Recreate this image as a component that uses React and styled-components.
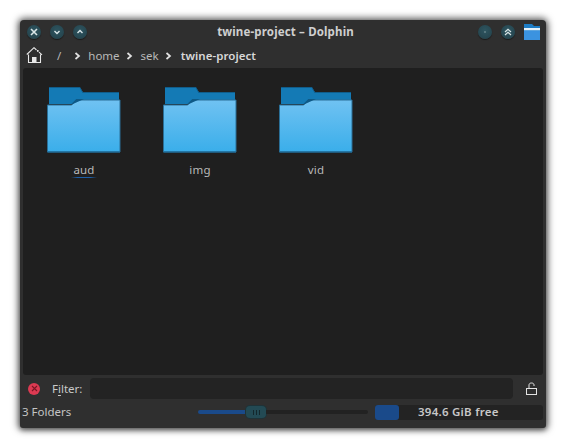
import React from "react";
import styled, { createGlobalStyle } from "styled-components";

const Global = createGlobalStyle`
  html, body { margin: 0; padding: 0; background: #fff; width: 566px; height: 448px; overflow: hidden; }
  * { box-sizing: border-box; }
`;
const Page = styled.div`
  width: 566px; height: 448px; padding: 20px; background: #fff;
  font-family: "Noto Sans", "Open Sans", sans-serif; font-size: 12px; color: #d6d6d6;
`;
const Win = styled.div`
  width: 526px; height: 408px; background: #2f2f2f; border-radius: 4px 4px 3px 3px;
  box-shadow: 0 0 7px 2px rgba(0,0,0,.62), 0 2px 4px rgba(0,0,0,.3);
  display: flex; flex-direction: column; overflow: hidden;
`;
const TitleBar = styled.div`
  height: 23px; flex: none; display: flex; align-items: center; padding: 0 6px 0 7px; position: relative;
`;
const Round = styled.span`
  width: 14px; height: 14px; border-radius: 50%; flex: none; margin-right: ${p => p.$gap ?? 9}px;
  background: radial-gradient(circle at 50% 40%, #2e5560, #223f48); box-shadow: 0 1px 1px rgba(0,0,0,.45);
  display: flex; align-items: center; justify-content: center;
`;
const Title = styled.div`
  flex: 1; text-align: center; font-weight: 700; font-size: 11.5px; color: #cfcfcf; padding-left: 6px; letter-spacing: .15px;
`;
const Crumbs = styled.div`
  height: 25px; flex: none; display: flex; align-items: center; padding: 0 0 0 6px;
`;
const CrumbText = styled.span`
  font-size: 11.5px; color: ${p => p.$active ? "#d8d8d8" : "#b9b9b9"}; font-weight: ${p => p.$active ? 600 : 400};
  letter-spacing: ${p => p.$active ? ".05px" : "0"};
  margin-left: ${p => p.$ml ?? 0}px; margin-right: ${p => p.$mr ?? 0}px;
`;
const ChevIcon = styled.svg`
  width: 7px; height: 8px; flex: none; margin: 1px ${p => p.$mr}px 0 6px;
`;
const View = styled.div`
  flex: none; height: 307px; margin: 0 3px; background: #1f1f1f; border-radius: 3px;
  display: flex; align-items: flex-start; padding: 19px 0 0 2px;
`;
const Item = styled.div`
  width: 116px; display: flex; flex-direction: column; align-items: center;
`;
const Label = styled.span`
  margin-top: 9px; padding-left: 2px; font-size: 11.5px; line-height: 16px; color: #b9b9b9; letter-spacing: .2px; position: relative;
`;
const FocusLine = styled.span`
  position: absolute; left: 0; right: -2px; bottom: 0; height: 1px;
  background: linear-gradient(90deg, transparent, #1d5fa8 25%, #1d5fa8 75%, transparent);
`;
const FilterBar = styled.div`
  height: 29px; flex: none; display: flex; align-items: center; padding: 0 9px 2px 8px;
`;
const Clear = styled.span`
  width: 12px; height: 12px; border-radius: 50%; background: #dc3a52; flex: none; margin-right: 12px;
  display: flex; align-items: center; justify-content: center;
`;
const FilterLabel = styled.span`
  color: #c8c8c8; font-size: 11.5px; margin: -1px 8px 0 0;
  u { text-decoration-thickness: 1px; text-underline-offset: 2px; }
`;
const Field = styled.div`
  flex: 1; height: 21px; background: #232323; border-radius: 4px; margin-right: 13px;
`;
const StatusBar = styled.div`
  height: 24px; flex: none; display: flex; align-items: center; padding: 0 3px 8px 2px;
`;
const Count = styled.span`
  width: 176px; flex: none; color: #c4c4c4; font-size: 11.5px; padding-left: 0; margin-top: -2px;
`;
const Slider = styled.div`
  width: 170px; flex: none; height: 16px; display: flex; align-items: center; margin-right: 7px;
`;
const Fill = styled.div`
  width: 48px; height: 4px; background: #1a4a8a; border-radius: 2px 0 0 2px;
`;
const Handle = styled.div`
  width: 20px; height: 12px; background: #234a54; border-radius: 4px; box-shadow: 0 0 0 1px #1e3338;
  display: flex; align-items: center; justify-content: center; gap: 2px;
`;
const Tick = styled.i`
  display: block; width: 1px; height: 5px; background: #13272c;
`;
const Track = styled.div`
  flex: 1; height: 4px; background: #222; border-radius: 0 2px 2px 0;
`;
const Space = styled.div`
  flex: 1; height: 15px; background: #232323; border-radius: 3px;
  display: flex; align-items: center;
`;
const Used = styled.div`
  width: 24px; height: 15px; background: #1a4a8a; border-radius: 3px; margin-right: 19px;
`;
const Free = styled.span`
  font-weight: 600; font-size: 11.5px; color: #c8c8c8; letter-spacing: .25px; margin-top: -1px;
`;

const Folder = () => (
  <svg width="75" height="66" viewBox="0 0 75 66">
    <defs>
      <linearGradient id="fg" x1="0" y1="0" x2="0" y2="1">
        <stop offset="0" stopColor="#70c2f2" />
        <stop offset="1" stopColor="#3aaeea" />
      </linearGradient>
    </defs>
    <path d="M3 .3H34L37 5.3H73V17H3Z" fill="#147ab5" />
    <path d="M3 .3H34L37 5.3H73V6H36.6L33.6 1H3Z" fill="#0f5c8a" />
    <path d="M1.5 18H25.7L30.7 13H74V65H1.5Z" fill="url(#fg)" stroke="#2a6f97" strokeWidth="1" />
    <path d="M1.5 64.2H74V65.4H1.5Z" fill="#1f6f9e" />
    <path d="M3 17H25.3L30.3 12H38L27 17Z" fill="#0e5a87" />
  </svg>
);
const Chev = ({ mr }) => (
  <ChevIcon viewBox="0 0 7 8" $mr={mr}>
    <path d="M1.5 1L5 4L1.5 7" fill="none" stroke="#e2e2e2" strokeWidth="1.7" />
  </ChevIcon>
);
const Glyph = ({ d, w = 1.4 }) => (
  <svg width="10" height="10" viewBox="0 0 10 10">
    <path d={d} fill="none" stroke="#d8e4e6" strokeWidth={w} />
  </svg>
);

export default function App() {
  return (
    <>
      <Global />
      <Page>
        <Win>
          <TitleBar>
            <Round $gap={9}><Glyph d="M2 2L8 8M8 2L2 8" w={1.6} /></Round>
            <Round $gap={9}><Glyph d="M2.5 4L5 6.5L7.5 4" /></Round>
            <Round $gap={0}><Glyph d="M2.5 6L5 3.5L7.5 6" /></Round>
            <Title>twine-project – Dolphin</Title>
            <Round $gap={9}><svg width="2" height="2"><circle cx="1" cy="1" r=".7" fill="#9fb4b8" /></svg></Round>
            <Round $gap={9}><Glyph d="M2 5L5 2.2L8 5M2 8L5 5.2L8 8" w={1.2} /></Round>
            <svg width="16" height="16" viewBox="0 0 16 16" style={{ flex: "none" }}>
              <path d="M0 0H8L10 2H16V16H0Z" fill="#1d7cc4" />
              <rect y="4" width="16" height="2.5" fill="#e6f2fa" />
              <rect y="6.5" width="16" height="9.5" fill="#3b93e0" />
            </svg>
          </TitleBar>
          <Crumbs>
            <svg width="17" height="17" viewBox="0 0 17 17" style={{ flex: "none" }}>
              <path d="M.8 7.5L8 .7L10.5 3M13 5.2L16 7.8M2.5 7.5V15.5H14.5V7.5" fill="none" stroke="#e8e8e8" strokeWidth="1.1" />
              <rect x="6" y="10" width="4.5" height="5.5" fill="#e8e8e8" />
              <rect x="11" y="3" width="1.6" height="1.8" fill="#e8e8e8" />
            </svg>
            <CrumbText $ml={14} $mr={7}>/</CrumbText>
            <Chev mr={7} />
            <CrumbText>home</CrumbText>
            <Chev mr={8} />
            <CrumbText>sek</CrumbText>
            <Chev mr={9} />
            <CrumbText $active>twine-project</CrumbText>
          </Crumbs>
          <View>
            <Item>
              <Folder />
              <Label>aud<FocusLine /></Label>
            </Item>
            <Item><Folder /><Label>img</Label></Item>
            <Item><Folder /><Label>vid</Label></Item>
          </View>
          <FilterBar>
            <Clear>
              <svg width="7" height="7" viewBox="0 0 7 7"><path d="M1 1L6 6M6 1L1 6" stroke="#7a1524" strokeWidth="1.1" /></svg>
            </Clear>
            <FilterLabel>F<u>i</u>lter:</FilterLabel>
            <Field />
            <svg width="11" height="13" viewBox="0 0 11 13" style={{ flex: "none" }}>
              <path d="M3 6V3C3 1.7 4 1 5.5 1S8 1.7 8 3V4" fill="none" stroke="#e4e4e4" strokeWidth="1" />
              <rect x=".5" y="6.5" width="10" height="6" fill="none" stroke="#e4e4e4" strokeWidth="1" />
            </svg>
          </FilterBar>
          <StatusBar>
            <Count>3 Folders</Count>
            <Slider>
              <Fill />
              <Handle><Tick /><Tick /><Tick /></Handle>
              <Track />
            </Slider>
            <Space>
              <Used />
              <Free>394.6 GiB free</Free>
            </Space>
          </StatusBar>
        </Win>
      </Page>
    </>
  );
}
